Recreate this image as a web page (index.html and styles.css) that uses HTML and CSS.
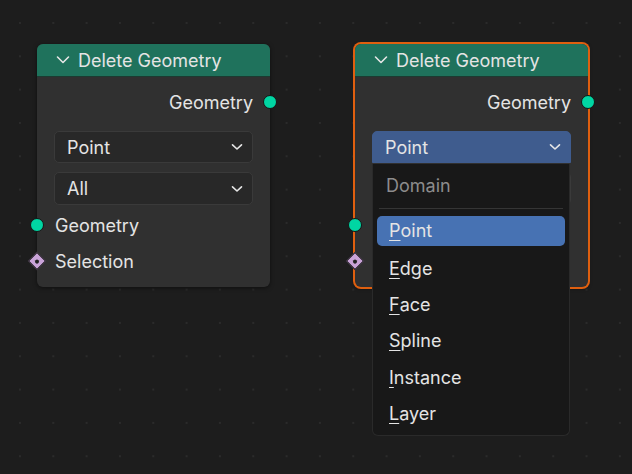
FILE: index.html
```html
<!DOCTYPE html>
<html>
<head>
<meta charset="utf-8">
<link rel="stylesheet" href="styles.css">
</head>
<body>
<div class="canvas">
  <div class="node node-a">
    <div class="header">
      <svg class="chev" width="14" height="10" viewBox="0 0 14 10"><path d="M1.5 2 L7 7.5 L12.5 2" fill="none" stroke="#e6e6e6" stroke-width="1.6" stroke-linecap="round" stroke-linejoin="round"/></svg>
      <span>Delete Geometry</span>
    </div>
    <div class="body">
      <div class="row out">Geometry<span class="sock out-sock"></span></div>
      <div class="dd">Point<svg class="ddchev" width="12" height="8" viewBox="0 0 12 8"><path d="M1.5 1.8 L6 6 L10.5 1.8" fill="none" stroke="#e6e6e6" stroke-width="1.6" stroke-linecap="round" stroke-linejoin="round"/></svg></div>
      <div class="dd">All<svg class="ddchev" width="12" height="8" viewBox="0 0 12 8"><path d="M1.5 1.8 L6 6 L10.5 1.8" fill="none" stroke="#e6e6e6" stroke-width="1.6" stroke-linecap="round" stroke-linejoin="round"/></svg></div>
      <div class="row in"><span class="sock in-sock"></span>Geometry</div>
      <div class="row in"><span class="dia"></span>Selection</div>
    </div>
  </div>

  <div class="node node-b">
    <div class="header">
      <svg class="chev" width="14" height="10" viewBox="0 0 14 10"><path d="M1.5 2 L7 7.5 L12.5 2" fill="none" stroke="#e6e6e6" stroke-width="1.6" stroke-linecap="round" stroke-linejoin="round"/></svg>
      <span>Delete Geometry</span>
    </div>
    <div class="body">
      <div class="row out">Geometry<span class="sock out-sock"></span></div>
      <div class="dd active">Point<svg class="ddchev" width="12" height="8" viewBox="0 0 12 8"><path d="M1.5 1.8 L6 6 L10.5 1.8" fill="none" stroke="#e6e6e6" stroke-width="1.6" stroke-linecap="round" stroke-linejoin="round"/></svg></div>
      <div class="dd"></div>
      <div class="row in"><span class="sock in-sock"></span></div>
      <div class="row in"><span class="dia"></span></div>
    </div>
  </div>

  <div class="menu">
    <div class="menu-title">Domain</div>
    <div class="sep"></div>
    <div class="item hl"><u>P</u>oint</div>
    <div class="item"><u>E</u>dge</div>
    <div class="item"><u>F</u>ace</div>
    <div class="item"><u>S</u>pline</div>
    <div class="item"><u>I</u>nstance</div>
    <div class="item"><u>L</u>ayer</div>
  </div>
</div>
</body>
</html>
```
FILE: styles.css
```css
html, body {
  margin: 0;
  padding: 0;
  width: 632px;
  height: 474px;
  overflow: hidden;
  background: #1d1d1d;
}
.canvas {
  position: relative;
  width: 632px;
  height: 474px;
  background-color: #1d1d1d;
  background-image: radial-gradient(circle, #2b2b2b 0.9px, transparent 1.3px);
  background-size: 33.33px 33.33px;
  background-position: 3.3px 6.3px;
  font-family: Inter, "Noto Sans", sans-serif;
  font-size: 18px;
  color: #e4e4e4;
}
.node {
  position: absolute;
  width: 233px;
  height: 243px;
  background: #303030;
  border-radius: 6px;
  box-shadow: 0 1px 4px rgba(0,0,0,0.5);
  display: flex;
  flex-direction: column;
}
.node-a { left: 37px; top: 44px; }
.node-b { left: 355px; top: 44px; box-shadow: 0 0 0 2px #df5f0f, 0 1px 4px rgba(0,0,0,0.5); }
.header {
  height: 33px;
  background: #1f725c;
  border-radius: 6px 6px 0 0;
  border-bottom: 1px solid #1b3b31;
  display: flex;
  align-items: center;
  padding-left: 19px;
  padding-top: 1px;
  gap: 8px;
  box-sizing: border-box;
}
.chev { margin-top: -2px; }
.body {
  position: relative;
  display: flex;
  flex-direction: column;
  padding: 8px 17px 0 17px;
}
.row {
  height: 34px;
  display: flex;
  align-items: center;
  position: relative;
}
.row.out { justify-content: flex-end; margin-bottom: 12px; }
.row.in { padding-left: 1px; }
.row.in + .row.in { margin-top: 2px; }
.sock {
  position: absolute;
  width: 12px;
  height: 12px;
  border-radius: 50%;
  background: #00d6a3;
  border: 1.5px solid #151515;
  top: 50%;
  transform: translate(-50%, -50%);
}
.out-sock { right: -17px; transform: translate(50%, -50%); }
.in-sock { left: -17px; }
.dia {
  position: absolute;
  left: -17px;
  top: 50%;
  width: 11px;
  height: 11px;
  background: #c9a3d8;
  border: 1.5px solid #151515;
  transform: translate(-50%, -50%) rotate(45deg);
}
.dia::after {
  content: "";
  position: absolute;
  left: 3.5px;
  top: 3.5px;
  width: 4px;
  height: 4px;
  border-radius: 50%;
  background: #222;
}
.dd {
  height: 32px;
  box-sizing: border-box;
  background: #282828;
  border: 1px solid #3a3a3a;
  border-radius: 5px;
  display: flex;
  align-items: center;
  justify-content: space-between;
  padding: 0 9px 0 12px;
  margin-bottom: 9px;
}
.dd + .dd { height: 33px; margin-bottom: 3px; }
.dd.active {
  background: #3f5c8e;
  border-color: #3f5c8e;
  border-radius: 5px 5px 0 0;
}
.menu {
  position: absolute;
  left: 372px;
  top: 164px;
  width: 198px;
  height: 272px;
  box-sizing: border-box;
  background: #181818;
  border: 1px solid #2a2a2a;
  border-top: none;
  border-radius: 0 0 6px 6px;
  padding: 0 4px;
  display: flex;
  flex-direction: column;
}
.menu-title {
  height: 44px;
  display: flex;
  align-items: center;
  padding-left: 9px;
  color: #8c8c8c;
}
.sep {
  height: 1px;
  background: #353535;
  margin: 0 2px 7px 2px;
}
.item {
  height: 30px;
  display: flex;
  align-items: center;
  padding-left: 12px;
  margin-bottom: 6.5px;
  border-radius: 5px;
}
.item.hl { background: #4772b3; margin-bottom: 8px; }
.item u {
  text-decoration-thickness: 1px;
  text-underline-offset: 3px;
}
```
